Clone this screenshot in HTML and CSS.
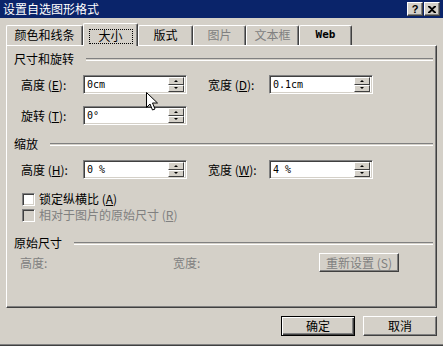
FILE: index.html
```html
<!DOCTYPE html>
<html>
<head>
    <title>设置自选图形格式</title>
    <link rel="stylesheet" href="styles.css">
</head>
<body>
    <div class="window">
        <div class="titlebar">
            <span class="title">设置自选图形格式</span>
            <div class="caption-btns">
                <span class="cbtn help">?</span>
                <span class="cbtn">
                    <svg width="8" height="7" viewBox="0 0 8 7"><path d="M0 0h2l2 2 2-2h2v1L5 3.5 8 6v1H6L4 5 2 7H0V6l3-2.5L0 1z" fill="#000"/></svg>
                </span>
            </div>
        </div>

        <div class="tabs">
            <div class="tab t1">颜色和线条</div>
            <div class="tab active"><span class="focus">大小</span></div>
            <div class="tab t3">版式</div>
            <div class="tab disabled">图片</div>
            <div class="tab disabled">文本框</div>
            <div class="tab web">Web</div>
        </div>

        <div class="panel">
            <div class="group-title"><span>尺寸和旋转</span><i></i></div>
            <div class="row">
                <label class="l1">高度 (<u>E</u>):</label>
                <div class="spin"><span class="val">0cm</span><div class="arrows"><b class="up"></b><b class="down"></b></div></div>
                <label class="l2">宽度 (<u>D</u>):</label>
                <div class="spin"><span class="val">0.1cm</span><div class="arrows"><b class="up"></b><b class="down"></b></div></div>
            </div>
            <div class="row r2">
                <label class="l1">旋转 (<u>T</u>):</label>
                <div class="spin"><span class="val">0°</span><div class="arrows"><b class="up"></b><b class="down"></b></div></div>
            </div>

            <div class="group-title g2"><span>缩放</span><i></i></div>
            <div class="row">
                <label class="l1">高度 (<u>H</u>):</label>
                <div class="spin"><span class="val">0 %</span><div class="arrows"><b class="up"></b><b class="down"></b></div></div>
                <label class="l2">宽度 (<u>W</u>):</label>
                <div class="spin"><span class="val">4 %</span><div class="arrows"><b class="up"></b><b class="down"></b></div></div>
            </div>
            <div class="check c1"><span class="box"></span>锁定纵横比 (<u>A</u>)</div>
            <div class="check disabled"><span class="box"></span>相对于图片的原始尺寸 (<u>R</u>)</div>

            <div class="group-title g3"><span>原始尺寸</span><i></i></div>
            <div class="row orig">
                <span class="gray o1">高度:</span>
                <span class="gray o2">宽度:</span>
                <span class="btn reset">重新设置 (S)</span>
            </div>
        </div>

        <div class="footer">
            <span class="btn default">确定</span>
            <span class="btn">取消</span>
        </div>

        <svg class="cursor" width="13" height="21" viewBox="0 0 13 21">
            <path d="M0.5 0.5v15l3.5-3.5 2.5 6 2.5-1-2.5-6h5z" fill="#fff" stroke="#000" stroke-width="1"/>
        </svg>
    </div>
</body>
</html>
```

FILE: styles.css
```css
body { margin: 0; background: #d4d0c8; font: 12px/14px "Noto Sans CJK SC", sans-serif; color: #000; }
.window { position: relative; width: 443px; height: 346px; box-sizing: border-box; background: #d4d0c8; border-bottom: 1px solid #404040; overflow: hidden; }
.window::after { content: ""; position: absolute; left: 0; right: 0; bottom: 0; height: 1px; background: #808080; }

.titlebar { height: 18px; background: #0a246a; color: #fff; display: flex; align-items: center; justify-content: space-between; padding: 0 3px 0 3px; }
.caption-btns { display: flex; gap: 1px; }
.cbtn { width: 16px; height: 14px; box-sizing: border-box; background: #d4d0c8; border: 1px solid; border-color: #fff #404040 #404040 #fff; box-shadow: inset -1px -1px #808080; display: flex; align-items: center; justify-content: center; color: #000; }
.help { font: bold 11px/12px "Liberation Sans", sans-serif; }

.tabs { display: flex; align-items: flex-end; height: 22px; margin-top: 5px; padding-left: 6px; position: relative; z-index: 2; }
.tab { height: 20px; box-sizing: border-box; width: 53px; text-align: center; line-height: 18px; border-top: 1px solid #fff; border-left: 1px solid #fff; border-right: 1px solid #404040; box-shadow: inset -1px 0 #808080; border-radius: 2px 2px 0 0; background: #d4d0c8; }
.t1 { width: 77px; }
.t3 { width: 55px; }
.tab.active { width: 55px; height: 23px; margin-bottom: -1px; padding-top: 3px; }
.focus { display: inline-block; width: 44px; height: 15px; line-height: 14px; outline: 1px dotted #000; outline-offset: -1px; }
.tab.disabled { color: #808080; }
.web { font: bold 11px/18px "DejaVu Sans Mono", monospace; }

.panel { margin: 0 6px; height: 263px; box-sizing: border-box; border: 1px solid; border-color: #fff #404040 #404040 #fff; box-shadow: inset -1px -1px #808080; padding: 6px 3px 0 7px; position: relative; z-index: 1; }

.group-title { display: flex; align-items: center; height: 14px; }
.group-title i { flex: 1; height: 1px; margin-left: 12px; border-top: 1px solid #808080; border-bottom: 1px solid #fff; }
.g2 { margin-top: 12px; }
.g3 { margin-top: 13px; }

.row { display: flex; align-items: center; height: 19px; margin-top: 9px; padding-left: 7px; }
.r2 { margin-top: 12px; }
.l1 { width: 62px; }
.l2 { width: 61px; margin-left: 21px; }
u { text-decoration: underline; }

.spin { width: 104px; height: 19px; box-sizing: border-box; background: #fff; border: 1px solid; border-color: #808080 #fff #fff #808080; box-shadow: inset 1px 1px #404040, inset -1px -1px #d4d0c8; display: flex; align-items: center; padding: 2px 2px 2px 3px; }
.val { flex: 1; font: 10px/14px "DejaVu Sans Mono", monospace; }
.arrows { display: flex; flex-direction: column; width: 16px; height: 15px; }
.arrows b { flex: 1; background: #d4d0c8; border: 1px solid; border-color: #fff #404040 #404040 #fff; display: flex; align-items: center; justify-content: center; }
.arrows b::before { content: ""; width: 0; height: 0; border-left: 2px solid transparent; border-right: 2px solid transparent; }
.up::before { border-bottom: 2px solid #000; }
.down::before { border-top: 2px solid #000; }

.check { display: flex; align-items: center; height: 16px; padding-left: 8px; }
.c1 { margin-top: 12px; }
.box { width: 13px; height: 13px; box-sizing: border-box; margin-right: 4px; background: #fff; border: 1px solid; border-color: #808080 #fff #fff #808080; box-shadow: inset 1px 1px #404040, inset -1px -1px #d4d0c8; }
.check.disabled { color: #808080; }
.check.disabled .box { background: #d4d0c8; }

.orig { margin-top: 3px; padding-left: 6px; }
.gray { color: #808080; }
.o1 { width: 153px; }
.o2 { width: 146px; }

.btn { display: inline-flex; align-items: center; justify-content: center; box-sizing: border-box; height: 20px; border: 1px solid; border-color: #fff #404040 #404040 #fff; box-shadow: inset -1px -1px #808080; background: #d4d0c8; }
.reset { width: 80px; height: 19px; color: #808080; }

.footer { display: flex; justify-content: flex-end; gap: 8px; padding: 8px 6px 0 0; }
.footer .btn { width: 74px; }
.btn.default { border: 1px solid #000; box-shadow: inset 1px 1px #fff, inset -1px -1px #404040, inset -2px -2px #808080; }

.cursor { position: absolute; left: 146px; top: 92px; z-index: 5; }
```
